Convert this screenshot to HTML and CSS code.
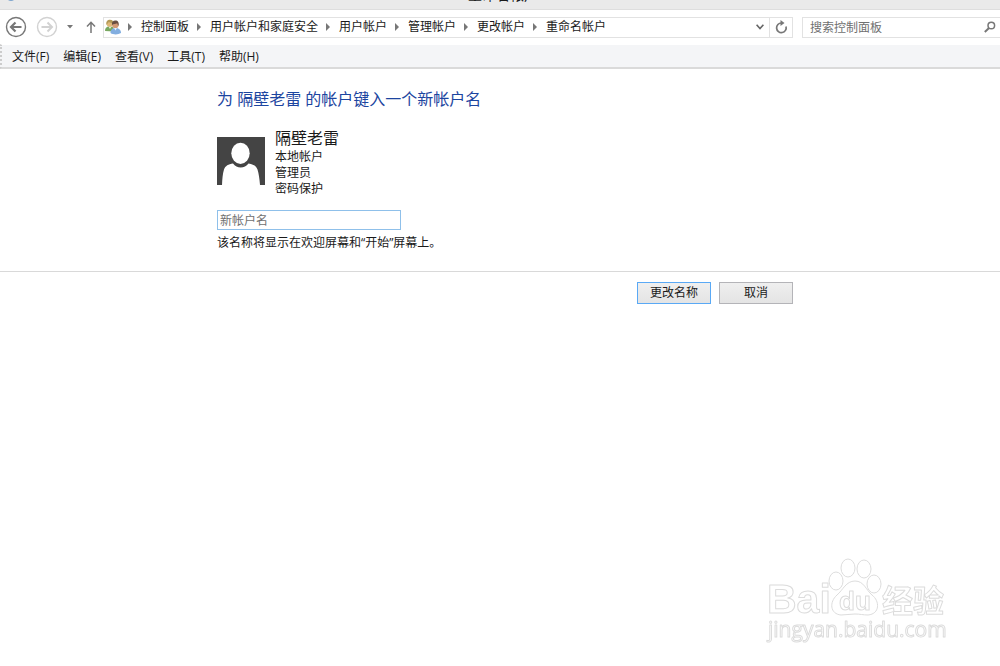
FILE: index.html
```
<!DOCTYPE html>
<html lang="zh-CN">
  <head>
    <meta charset="UTF-8" />
    <meta name="viewport" content="width=device-width, initial-scale=1.0" />
    <title>重命名帐户</title>
    <link rel="stylesheet" href="styles.css">
  </head>

  <body>
    <header class="titlebar">
      <svg class="titlebar-icon" width="10" height="10" viewBox="0 0 10 10" aria-hidden="true">
        <circle cx="5" cy="5" r="5" fill="#7fa6cd" />
      </svg>
      <span class="titlebar-text">重命名帐户</span>
      <span class="titlebar-controls"></span>
    </header>

    <div class="navbar">
      <button class="nav-btn" type="button" aria-label="后退">
        <svg width="22" height="22" viewBox="0 0 22 22" fill="none" stroke="#777">
          <circle cx="11" cy="11" r="9.5" stroke-width="1.4" />
          <path d="M16.5 11H6.5M10.5 6.5L6 11l4.500 4.500" stroke-width="2.200" />
        </svg>
      </button>
      <button class="nav-btn nav-forward" type="button" aria-label="前进">
        <svg width="22" height="22" viewBox="0 0 22 22" fill="none" stroke="#d2d2d2">
          <circle cx="11" cy="11" r="9.5" stroke-width="1.4" />
          <path d="M5.500 11h10M11.500 6.500L16 11l-4.500 4.500" stroke-width="2" />
        </svg>
      </button>
      <button class="nav-btn nav-recent" type="button" aria-label="最近浏览的位置">
        <svg width="6" height="4" viewBox="0 0 6 4"><path d="M0 0h6L3 3.500z" fill="#777" /></svg>
      </button>
      <button class="nav-btn nav-up" type="button" aria-label="向上">
        <svg width="12" height="12" viewBox="0 0 12 12" fill="none" stroke="#777" stroke-width="1.5">
          <path d="M6 12V1.500M2 5.500l4-4.200 4 4.200" />
        </svg>
      </button>

      <nav class="address" aria-label="地址">
        <svg class="address-icon" width="16" height="16" viewBox="0 0 16 16" aria-hidden="true">
          <path d="M0 12c0-3 1.500-4.500 4-4.800L8 8l1 4.500z" fill="#79a860" />
          <path d="M3.500 7.500L5 10l1.500-2.500z" fill="#e8efe0" />
          <circle cx="4.800" cy="4.500" r="3.200" fill="#e0b878" />
          <path d="M1.500 6C.8 2.500 2.500.8 5 .8s3.500 1.700 3.200 3.400C6 4.200 5 3.500 4 3 3 3.500 2.500 4.500 1.500 6z" fill="#b39a58" />
          <circle cx="10.300" cy="6" r="3.200" fill="#d39a76" />
          <path d="M7 6c-.5-3 1-4.500 3.300-4.500 2.700 0 4 2 3.200 5.500-.8-1-1-2-1.300-2.700C10.500 5 8.500 5 7 6z" fill="#6a4f42" />
          <path d="M5.500 14c0-3.500 2-5 5-5s5.500 1.500 5.500 5c-3 1.800-7.500 2-10.500 0z" fill="#82aee0" />
          <path d="M9 9l1.500 2.500L12 9z" fill="#eaf2fb" />
        </svg>
        <ol class="crumbs">
          <li><a href="#">控制面板</a></li>
          <li><a href="#">用户帐户和家庭安全</a></li>
          <li><a href="#">用户帐户</a></li>
          <li><a href="#">管理帐户</a></li>
          <li><a href="#">更改帐户</a></li>
          <li><a href="#">重命名帐户</a></li>
        </ol>
        <button class="address-btn" type="button" aria-label="以前的位置">
          <svg width="8" height="6" viewBox="0 0 8 6" fill="none" stroke="#666" stroke-width="1.600">
            <path d="M.6.800L4 4.600 7.400.800" />
          </svg>
        </button>
        <button class="address-btn address-refresh" type="button" aria-label="刷新">
          <svg width="14" height="14" viewBox="0 0 14 14">
            <path d="M7.500 3A4.800 4.800 0 1 0 12 6.500" fill="none" stroke="#777" stroke-width="1.700" />
            <path d="M6.500 0l4 3-4 3z" fill="#777" />
          </svg>
        </button>
      </nav>

      <form class="search">
        <input class="search-input" type="search" placeholder="搜索控制面板" aria-label="搜索控制面板" />
        <button class="nav-btn" type="submit" aria-label="搜索">
          <svg width="12" height="12" viewBox="0 0 12 12" fill="none" stroke="#777">
            <circle cx="7.300" cy="4.500" r="3.300" stroke-width="1.500" />
            <path d="M5 7L.8 11" stroke-width="2" />
          </svg>
        </button>
      </form>
    </div>

    <div class="menubar">
      <button class="menu-item" type="button">文件(F)</button>
      <button class="menu-item" type="button">编辑(E)</button>
      <button class="menu-item" type="button">查看(V)</button>
      <button class="menu-item" type="button">工具(T)</button>
      <button class="menu-item" type="button">帮助(H)</button>
    </div>

    <main>
      <form>
        <div class="panel">
          <h1 class="heading">为 隔壁老雷 的帐户键入一个新帐户名</h1>

          <div class="account">
            <svg class="avatar" width="48" height="48" viewBox="0 0 48 48" aria-hidden="true">
              <path d="M0 0h48v48H0z" fill="#444" />
              <ellipse cx="23.500" cy="16.300" rx="9.200" ry="10.600" fill="#fff" />
              <path d="M5 48c.3-6 .7-11.500 2-15.500 1.300-3.800 4.500-5.200 9-6 2 2.700 4.700 4 7.700 4s5.800-1.300 7.800-4c4.500.8 7.700 2.200 9 6 1.300 4 2 9.500 2.500 15.500z" fill="#fff" />
            </svg>
            <div class="account-info">
              <p class="account-name">隔壁老雷</p>
              <p>本地帐户</p>
              <p>管理员</p>
              <p>密码保护</p>
            </div>
          </div>

          <input class="name-input" id="new-name" type="text" placeholder="新帐户名" />
          <label class="hint" for="new-name">该名称将显示在欢迎屏幕和“开始”屏幕上。</label>
        </div>

        <div class="actions">
          <button class="btn btn-default" type="submit">更改名称</button>
          <button class="btn" type="button">取消</button>
        </div>
      </form>
    </main>

    <svg class="watermark" width="184" height="92" viewBox="0 0 184 92" role="img" aria-label="Baidu 经验">
      <g>
        <ellipse cx="71" cy="24" rx="7" ry="9" />
        <ellipse cx="83" cy="11" rx="7" ry="9" />
        <ellipse cx="99" cy="12" rx="7" ry="9" />
        <ellipse cx="109" cy="27" rx="7" ry="9" />
        <path d="M90 24c9 0 11 9 17 14 8 6 8 19-4 20-5 0-8-1-13-1s-9 1-14 1c-11-1-12-13-4-20 6-5 9-14 18-14z" />
      </g>
      <text class="watermark-logo" x="2" y="56">Bai</text>
      <text class="watermark-du" x="74" y="53">du</text>
      <text class="watermark-cjk" x="117" y="55">经验</text>
      <text class="watermark-url" x="3" y="80">jingyan.baidu.com</text>
    </svg>
  </body>
</html>
```
FILE: styles.css
```
* {
  box-sizing: border-box;
}

body {
  margin: 0;
  background: #fff;
  color: #1a1a1a;
  font-family: "Open Sans", "Noto Sans CJK SC", sans-serif;
  font-size: 12px;
  line-height: 16px;
}

button,
input {
  font: inherit;
  color: inherit;
}

p,
h1,
ol {
  margin: 0;
  padding: 0;
}

.titlebar {
  display: grid;
  grid-template-columns: 1fr auto 1fr;
  align-items: end;
  height: 10px;
  padding-left: 6px;
  overflow: hidden;
  background: #eaeaea;
  border-bottom: 1px solid #dedede;
}

.titlebar-icon {
  margin-bottom: 8px;
}

.titlebar-text {
  margin-bottom: 6px;
  font-size: 14px;
  line-height: 16px;
}

.titlebar-controls {
  justify-self: end;
  align-self: start;
  width: 32px;
  height: 1px;
  background: #bbb;
}

/* the first row is taller than the bar, so it grows upwards */
.titlebar {
  align-content: end;
}

.navbar {
  display: flex;
  align-items: center;
  height: 34px;
  padding-left: 5px;
}

.nav-btn {
  display: flex;
  padding: 0;
  border: none;
  background: none;
}

.nav-forward {
  margin-left: 9px;
}

.nav-recent {
  margin-left: 9px;
}

.nav-up {
  margin: 0 6px 0 12px;
}

.address {
  display: flex;
  flex: 1;
  align-items: center;
  height: 21px;
  border: 1px solid #e2e2e2;
}

.address-icon {
  margin: 0 7px 0 1px;
}

.crumbs {
  display: flex;
  flex: 1;
  list-style: none;
  white-space: nowrap;
}

.crumbs li {
  display: flex;
  align-items: center;
}

.crumbs li::before {
  content: "";
  margin: 0 9px 0 8px;
  border: 4px solid transparent;
  border-left-color: #777;
  border-right: none;
}

.crumbs li:first-child::before {
  margin-left: 0;
}

.crumbs a {
  color: inherit;
  text-decoration: none;
}

.address-btn {
  display: flex;
  align-items: center;
  justify-content: center;
  width: 18px;
  height: 19px;
  padding: 0;
  border: none;
  background: none;
}

.address-refresh {
  width: 23px;
  border-left: 1px solid #e2e2e2;
}

.search {
  display: flex;
  align-items: center;
  width: 198px;
  height: 21px;
  margin-left: 9px;
  padding: 0 4px 0 7px;
  border: 1px solid #e2e2e2;
  border-right: none;
}

.search-input {
  flex: 1;
  min-width: 0;
  height: 19px;
  padding: 0;
  border: none;
  outline: none;
  background: none;
}

.search-input::placeholder,
.name-input::placeholder {
  color: #707070;
  opacity: 1;
}

.menubar {
  display: flex;
  gap: 14px;
  height: 25px;
  padding-left: 10px;
  background: #f4f5f7;
  border-top: 1px solid #fff;
  border-left: 2px dotted #ccc;
  border-bottom: 2px solid #dadada;
}

.menu-item {
  padding: 1px 0 0;
  border: none;
  background: none;
}

.panel {
  display: flex;
  flex-direction: column;
  align-items: flex-start;
  padding: 18px 207px 20px 217px;
  border-bottom: 1px solid #d9d9d9;
}

.heading {
  color: #1c45a0;
  font-size: 16px;
  font-weight: 400;
  line-height: 24px;
}

.account {
  display: flex;
  gap: 10px;
  margin-top: 16px;
}

.avatar {
  margin-top: 10px;
}

.account-name {
  font-size: 16px;
  line-height: 22px;
}

.name-input {
  width: 184px;
  height: 20px;
  margin-top: 13px;
  padding: 0 2px;
  border: 1px solid #8fc0ea;
  outline: none;
}

.hint {
  margin-top: 5px;
}

.actions {
  display: flex;
  justify-content: flex-end;
  gap: 8px;
  padding: 10px 207px 10px 217px;
}

.btn {
  width: 74px;
  height: 22px;
  padding: 0;
  border: 1px solid #b4b4b8;
  background: linear-gradient(#efefef, #e4e4e4);
}

.btn-default {
  border-color: #5aa9f5;
}

.watermark {
  position: fixed;
  right: 51px;
  bottom: 17px;
  fill: #fff;
  stroke: #dcdcdc;
  stroke-width: 1px;
  stroke-linejoin: round;
  pointer-events: none;
}

.watermark-logo {
  font: 700 41px "Liberation Sans", sans-serif;
}

.watermark-du {
  font: 700 26px "Liberation Sans", sans-serif;
}

.watermark-cjk {
  font: 700 31px "Noto Sans CJK SC", sans-serif;
}

.watermark-url {
  font: 400 21px "Open Sans", sans-serif;
}
```
